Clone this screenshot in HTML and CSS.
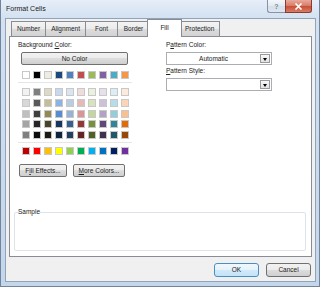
FILE: index.html
```html
<!doctype html>
<html>
<head>
<meta charset="utf-8">
<title>Format Cells</title>
<link rel="stylesheet" href="styles.css">
<script>
var theme=['#ffffff','#000000','#eeece1','#1f497d','#4f81bd','#c0504d','#9bbb59','#8064a2','#4bacc6','#f79646'];
var tints=[
	['#f2f2f2','#7f7f7f','#ddd9c3','#c6d9f0','#dbe5f1','#f2dcdb','#ebf1dd','#e5e0ec','#dbeef3','#fdeada'],
	['#d8d8d8','#595959','#c4bd97','#8db3e2','#b8cce4','#e5b9b7','#d7e3bc','#ccc1d9','#b7dde8','#fbd5b5'],
	['#bfbfbf','#3f3f3f','#938953','#548dd4','#95b3d7','#d99694','#c3d69b','#b2a2c7','#92cddc','#fac08f'],
	['#a5a5a5','#262626','#494429','#17365d','#366092','#953734','#76923c','#5f497a','#31859b','#e36c09'],
	['#7f7f7f','#0c0c0c','#1d1b10','#0f243e','#244061','#632423','#4f6128','#3f3151','#205867','#974806']
];
var standard=['#c00000','#ff0000','#ffc000','#ffff00','#92d050','#00b050','#00b0f0','#0070c0','#002060','#7030a0'];
function fill(id,list){
	var box=document.getElementById(id);
	for(var i=0;i<list.length;i++){
		var sw=document.createElement('span');
		sw.className='swatch';
		sw.style.background=list[i];
		box.appendChild(sw);
	}
}
window.onload=function(){
	fill('theme',theme);
	var all=[];
	for(var r=0;r<tints.length;r++)all=all.concat(tints[r]);
	fill('tints',all);
	fill('standard',standard);
}
</script>
</head>
<body>
<div class="window">
	<div class="titlebar">
		<span class="title">Format Cells</span>
		<div class="caption">
			<span class="cbtn help">?</span>
			<span class="cbtn close"><svg width="9" height="7" viewBox="0 0 9 7"><path d="M1.5 0.5L7.5 6.5M7.5 0.5L1.5 6.5" stroke="#fff" stroke-width="1.6"/></svg></span>
		</div>
	</div>
	<div class="client">
		<div class="tabs">
			<span class="tab">Number</span>
			<span class="tab">Alignment</span>
			<span class="tab">Font</span>
			<span class="tab">Border</span>
			<span class="tab sel">Fill</span>
			<span class="tab">Protection</span>
		</div>
		<div class="panel">
			<div class="top">
				<div class="col">
					<div class="label">Background <u>C</u>olor:</div>
					<button class="btn nocolor">No Color</button>
					<div id="theme" class="swatches first"></div>
					<div class="sep"></div>
					<div id="tints" class="swatches tints"></div>
					<div class="sep"></div>
					<div id="standard" class="swatches std"></div>
					<div class="actions">
						<button class="btn effects">F<u>i</u>ll Effects...</button>
						<button class="btn more"><u>M</u>ore Colors...</button>
					</div>
				</div>
				<div class="col">
					<div class="label">P<u>a</u>ttern Color:</div>
					<div class="combo"><span class="val">Automatic</span><span class="arrow"></span></div>
					<div class="label second"><u>P</u>attern Style:</div>
					<div class="combo"><span class="val"></span><span class="arrow"></span></div>
				</div>
			</div>
			<fieldset class="sample">
				<legend>Sample</legend>
			</fieldset>
		</div>
		<div class="footer">
			<button class="btn ok">OK</button>
			<button class="btn">Cancel</button>
		</div>
	</div>
</div>
</body>
</html>
```

FILE: styles.css
```css
*{margin:0;padding:0;box-sizing:border-box;}
html,body{width:320px;height:287px;overflow:hidden;background:#c4d5e9;}
body{font-family:"Liberation Sans","DejaVu Sans",sans-serif;font-size:6.5px;color:#222;}
u{text-decoration:underline;}
.window{display:flex;flex-direction:column;width:320px;height:287px;padding:0 3px 4px 4px;border:1px solid #71849c;border-top:0;background:linear-gradient(#e6eef8,#d3e1f1 18px,#c4d6ea);}
.titlebar{display:flex;align-items:flex-start;height:18px;}
.title{padding:5px 0 0 1px;font-size:7px;line-height:8px;color:#1a1a1a;}
.caption{display:flex;margin-left:auto;margin-right:4px;}
.cbtn{display:flex;align-items:center;justify-content:center;height:13px;border:1px solid #8593a6;border-top:0;}
.help{width:18px;border-right:0;border-radius:0 0 0 3px;background:linear-gradient(#f4f7fb,#e2e9f1 50%,#d5dfe9 50%,#dee6ef);color:#7a8799;font-size:7px;font-weight:bold;}
.close{width:27px;border-color:#8a3a30;border-radius:0 0 3px 0;background:linear-gradient(#e8a99c,#d87a66 50%,#c84c36 50%,#d87c63);}
.client{flex:1;display:flex;flex-direction:column;padding:0 3px;background:#f0f0f0;border:1px solid #8fa3ba;}
.tabs{display:flex;align-items:flex-end;height:17px;padding-left:2px;}
.tab{height:15px;padding:0 5px;min-width:32px;border:1px solid #898c95;border-bottom:0;border-right:0;background:linear-gradient(#f3f3f3,#ebebeb 50%,#dddddd 50%,#d2d2d2);line-height:14px;text-align:center;}
.tab:last-child{border-right:1px solid #898c95;}
.tab.sel{position:relative;z-index:1;height:18px;min-width:35px;margin:0 -2px -1px -2px;border-right:1px solid #898c95;background:#fff;line-height:16px;}
.tab.sel+.tab{border-left:0;}
.panel{flex:1;display:flex;flex-direction:column;padding:4px 0 5px 8px;background:#fff;border:1px solid #898c95;}
.top{display:grid;grid-template-columns:148px 1fr;}
.col{display:flex;flex-direction:column;align-items:flex-start;}
.label{line-height:8px;}
.label.second{margin-top:2px;}
.btn{height:13px;border:1px solid #707070;border-radius:2px;background:linear-gradient(#f2f2f2,#ebebeb 50%,#dddddd 50%,#cfcfcf);font-family:inherit;font-size:6.5px;color:#1a1a1a;line-height:11px;}
.nocolor{width:107px;margin:3px 0 0 3px;}
.swatches{display:grid;grid-template-columns:repeat(10,8px);column-gap:3px;margin-left:4px;}
.swatch{width:8px;height:8px;border:1px solid #c8c8c8;}
.swatches.first{margin-top:6px;}
.swatches.tints{row-gap:2.75px;margin-top:5px;}
.swatches.std{margin-top:4px;}
.sep{width:114px;height:1px;margin-top:3px;background:#e6e6e6;}
.actions{display:flex;gap:6px;margin:9px 0 0 1px;}
.effects{width:48px;}
.more{width:52px;}
.combo{display:flex;align-items:center;width:106px;height:13px;margin-top:3px;border:1px solid #abadb3;background:#fff;}
.combo .val{flex:1;text-align:center;line-height:11px;}
.combo .arrow{position:relative;width:10px;height:9px;margin-right:1px;border:1px solid #999;background:linear-gradient(#f8f8f8,#e2e2e2);}
.combo .arrow:after{content:"";position:absolute;left:2px;top:3px;border:2px solid transparent;border-top:3px solid #000;border-bottom:0;}
.sample{margin:auto 5px 0 -4px;height:43px;border:1px solid #dde3e8;border-radius:2px;padding:0 3px;}
.sample legend{margin-left:0;padding:0;line-height:8px;font-size:6.5px;}
.footer{display:flex;justify-content:flex-end;gap:7px;height:24px;padding:6px 1px 4px 0;}
.footer .btn{width:45px;height:14px;border-radius:3px;line-height:12px;}
.footer .ok{border-color:#4a8fc4;background:linear-gradient(#f0f8fd,#e4f2fb 50%,#d2eafa 50%,#c4e3f7);}
```
